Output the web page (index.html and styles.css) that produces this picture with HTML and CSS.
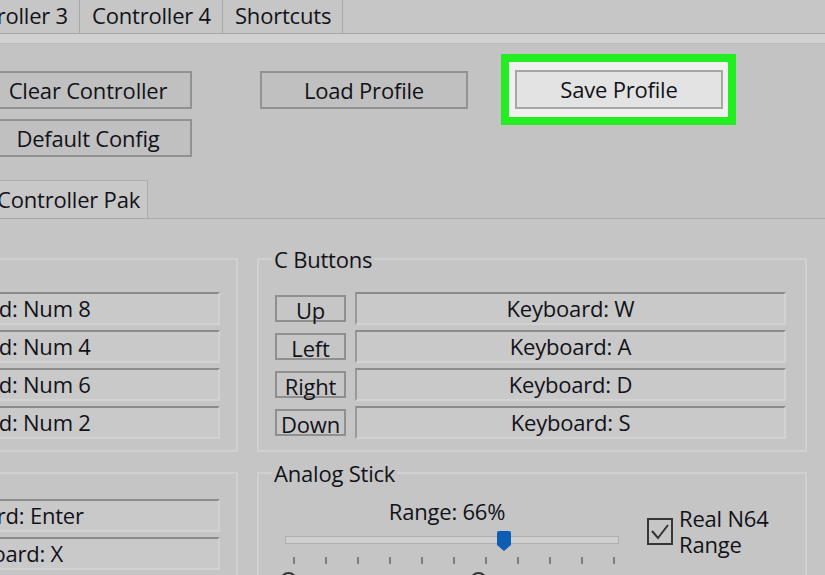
FILE: index.html
```html
<!DOCTYPE html>
<html>
<head>
<meta charset="utf-8">
<title>Controller config</title>
<link rel="stylesheet" href="styles.css">
</head>
<body>
<div class="tabstrip">
  <div class="tab">Controller 3</div>
  <div class="tab">Controller 4</div>
  <div class="tab">Shortcuts</div>
</div>
<div class="band"></div>
<div class="page">
  <div class="toprow">
    <div class="col">
      <button class="btn">Clear Controller</button>
      <button class="btn">Default Config</button>
    </div>
    <button class="btn load">Load Profile</button>
    <div class="highlight"><button class="btn save">Save Profile</button></div>
  </div>
  <div class="subtabs">
    <div class="subtab">Controller Pak</div>
  </div>
  <div class="subpage">
    <div class="groups">
      <fieldset class="group">
        <legend>D-Pad</legend>
        <div class="gbody left">
          <div class="row"><span class="key">Up</span><span class="field">Keyboard: Num 8</span></div>
          <div class="row"><span class="key">Left</span><span class="field">Keyboard: Num 4</span></div>
          <div class="row"><span class="key">Right</span><span class="field">Keyboard: Num 6</span></div>
          <div class="row"><span class="key">Down</span><span class="field">Keyboard: Num 2</span></div>
        </div>
      </fieldset>
      <fieldset class="group">
        <legend>C Buttons</legend>
        <div class="gbody">
          <div class="row"><span class="key">Up</span><span class="field">Keyboard: W</span></div>
          <div class="row"><span class="key">Left</span><span class="field">Keyboard: A</span></div>
          <div class="row"><span class="key">Right</span><span class="field">Keyboard: D</span></div>
          <div class="row"><span class="key">Down</span><span class="field">Keyboard: S</span></div>
        </div>
      </fieldset>
      <fieldset class="group">
        <legend>Buttons</legend>
        <div class="gbody left tight">
          <div class="row"><span class="key">Start</span><span class="field">Keyboard: Enter</span></div>
          <div class="row"><span class="key">A</span><span class="field">Keyboard: X</span></div>
        </div>
      </fieldset>
      <fieldset class="group">
        <legend>Analog Stick</legend>
        <div class="analog">
          <div class="slider">
            <div class="range-label">Range: 66%</div>
            <div class="track-wrap">
              <div class="track"></div>
              <svg class="thumb" viewBox="0 0 14 20" width="14" height="20"><path d="M2 0 H12 Q14 0 14 2 V14 L7 20 L0 14 V2 Q0 0 2 0 Z" fill="#0d5db5"/></svg>
            </div>
            <div class="ticks"><i></i><i></i><i></i><i></i><i></i><i></i><i></i><i></i><i></i><i></i><i></i></div>
            <div class="radios"><span class="radio"></span><span class="radio"></span></div>
          </div>
          <div class="check">
            <span class="box"><svg viewBox="0 0 22 23" width="22" height="23"><path d="M3 11 L9 18 L19 5" fill="none" stroke="#333" stroke-width="2"/></svg></span>
            <span class="check-label"><span class="ln">Real N64</span><span class="ln">Range</span></span>
          </div>
        </div>
      </fieldset>
    </div>
  </div>
</div>
</body>
</html>
```
FILE: styles.css
```css
* { box-sizing: border-box; }
html, body { margin: 0; padding: 0; }
body {
  width: 825px;
  height: 575px;
  overflow: hidden;
  background: #c3c3c3;
  font-family: "Open Sans", "Noto Sans", sans-serif;
  font-size: 22px;
  letter-spacing: -0.2px;
  color: #121219;
}
.tabstrip {
  display: flex;
  height: 34px;
  margin-left: -63px;
  background: #c6c6c6;
  border-bottom: 1px solid #a6a6a6;
}
.tab {
  padding: 0 11px 0 12px;
  line-height: 31px;
  border-right: 1px solid #a9a9a9;
  white-space: nowrap;
}
.band {
  height: 10px;
  background: #d1d1d1;
  border-bottom: 1px solid #bcbcbc;
}
.page { padding-top: 10px; }
.toprow {
  display: flex;
  align-items: flex-start;
  margin-left: -16px;
}
.col {
  display: flex;
  flex-direction: column;
  gap: 10px;
  margin-top: 17px;
}
.btn {
  width: 208px;
  height: 38px;
  padding: 0;
  font: inherit;
  letter-spacing: inherit;
  color: inherit;
  background: #c0c0c0;
  border: 2px solid #929292;
  line-height: 33px;
  text-align: center;
  white-space: nowrap;
}
.load { margin-left: 68px; margin-top: 17px; }
.highlight {
  margin-left: 33px;
  border: 8px solid #22ee22;
  background: #f0f0f0;
  padding: 8px 5px 8px 6px;
}
.save {
  height: 39px;
  line-height: 35px;
  background: #e3e3e3;
  border-color: #a6a6a6;
}
.subtabs {
  display: flex;
  margin-top: 23px;
  margin-left: -12px;
}
.subtab {
  height: 38px;
  line-height: 37px;
  padding: 0 7px 0 8px;
  border: 1px solid #adadad;
  border-bottom: 0;
  background: #c8c8c8;
  white-space: nowrap;
}
.subpage {
  border-top: 1px solid #a8a8a8;
  background: #c5c5c5;
  padding-top: 29px;
  height: 400px;
}
.groups {
  display: grid;
  grid-template-columns: 550px 550px;
  column-gap: 19px;
  row-gap: 10px;
  margin-left: -312px;
}
.group {
  margin: 0;
  padding: 0;
  min-width: 0;
  border: 2px solid #d0d0d0;
}
.group legend {
  margin-left: 13px;
  padding: 0 2px;
  line-height: 22px;
}
.gbody {
  display: flex;
  flex-direction: column;
  gap: 5px;
  padding: 22px 19px 11px 16px;
}
.gbody.left { padding-right: 16px; }
.gbody.tight { padding-top: 15px; }
.row {
  display: flex;
  align-items: center;
  gap: 9px;
  height: 33px;
}
.key {
  width: 71px;
  height: 27px;
  border: 2px solid #8f8f8f;
  background: #c6c6c6;
  line-height: 25px;
  padding-top: 1px;
  text-align: center;
  flex: none;
}
.field {
  flex: 1;
  height: 33px;
  border: 2px solid;
  border-color: #8b8b8b #d2d2d2 #d2d2d2 #999999;
  background: #c9c9c9;
  line-height: 29px;
  text-align: center;
  white-space: nowrap;
  overflow: hidden;
}
.analog {
  display: flex;
  align-items: flex-start;
  padding: 16px 19px 0 26px;
}
.slider { width: 334px; }
.range-label {
  height: 22px;
  line-height: 22px;
  text-align: center;
  padding-right: 10px;
}
.track-wrap {
  position: relative;
  height: 8px;
  margin-top: 14px;
}
.track {
  height: 8px;
  border: 1px solid #aeaeae;
  background: #cfcfcf;
}
.thumb {
  position: absolute;
  left: 212px;
  top: -5px;
}
.ticks {
  display: flex;
  justify-content: space-between;
  height: 7px;
  margin-top: 13px;
  padding: 0 4px 0 8px;
}
.ticks i { width: 2px; background: #7e7e7e; }
.radios {
  display: flex;
  gap: 173px;
  margin: 8px 0 0 -5px;
}
.radio {
  width: 17px;
  height: 17px;
  border: 2px solid #333;
  border-radius: 50%;
}
.check {
  display: flex;
  align-items: center;
  gap: 6px;
  margin: 6px 0 0 28px;
}
.box {
  width: 26px;
  height: 27px;
  border: 2px solid #363636;
  background: #c6c6c6;
  display: flex;
}
.check-label {
  display: flex;
  flex-direction: column;
  gap: 2px;
}
.ln { display: block; line-height: 24px; height: 24px; }
```
